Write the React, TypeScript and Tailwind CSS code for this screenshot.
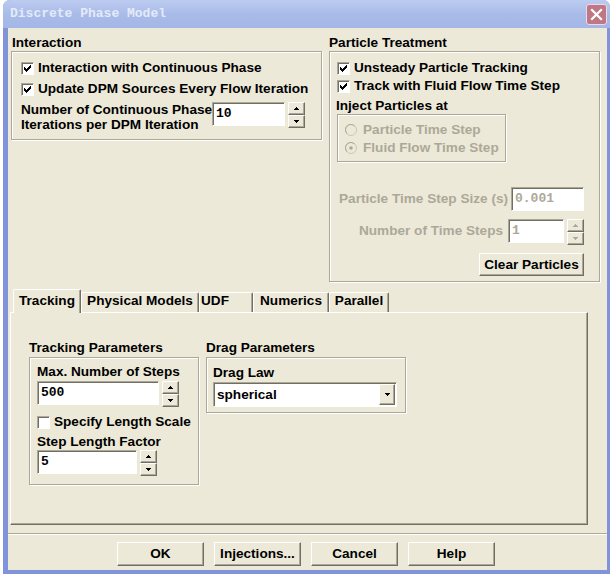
import type { ReactNode } from 'react';

// classic 3D edges on the beige dialog face
const raised =
  'border border-t-white border-l-white border-r-[#716f64] border-b-[#716f64] shadow-[inset_-1px_-1px_0_#aca899]';
const sunken =
  'border border-t-[#aca899] border-l-[#aca899] border-r-white border-b-white shadow-[inset_1px_1px_0_#716f64]';
const etched = 'border border-[#aca899] shadow-[inset_1px_1px_0_#fff,1px_1px_0_#fff]';

function CheckBox({ checked }: { checked: boolean }) {
  return (
    <span className={`w-[13px] h-[13px] bg-white flex items-center justify-center shrink-0 ${sunken}`}>
      {checked && (
        <svg width="7" height="7" viewBox="0 0 7 7" shapeRendering="crispEdges">
          <polygon points="0,2 2,4 7,-1 7,2 2,7 0,5" fill="#000" />
        </svg>
      )}
    </span>
  );
}

function CheckRow({ checked, label, className = '' }: { checked: boolean; label: string; className?: string }) {
  return (
    <div className={`flex items-center h-[16px] gap-[4px] whitespace-nowrap ${className}`}>
      <CheckBox checked={checked} />
      <span>{label}</span>
    </div>
  );
}

function RadioRow({ checked = false, label, className = '' }: { checked?: boolean; label: string; className?: string }) {
  return (
    <div className={`flex items-center h-[16px] gap-[6px] whitespace-nowrap text-[#aca899] ${className}`}>
      <svg width="12" height="12" viewBox="0 0 12 12" className="shrink-0">
        <circle cx="6" cy="6" r="5.5" fill="#ece9d8" stroke="#c9c6b8" />
        <path d="M2 9.5 A5 5 0 0 1 9.5 2" fill="none" stroke="#aca899" />
        {checked && <circle cx="6" cy="6" r="1.8" fill="#aca899" />}
      </svg>
      <span>{label}</span>
    </div>
  );
}

function Arrow({ up, color }: { up: boolean; color: string }) {
  return (
    <svg width="5" height="3" viewBox="0 0 5 3" shapeRendering="crispEdges">
      <polygon points={up ? '2.5,0 5,3 0,3' : '0,0 5,0 2.5,3'} fill={color} />
    </svg>
  );
}

function Spin({ disabled = false, className = '' }: { disabled?: boolean; className?: string }) {
  const c = disabled ? '#aca899' : '#000';
  return (
    <div className={`flex flex-col w-[17px] h-[26px] shrink-0 ${className}`}>
      <div className={`h-[13px] flex items-center justify-center bg-[#ece9d8] ${raised}`}>
        <Arrow up color={c} />
      </div>
      <div className={`h-[13px] flex items-center justify-center bg-[#ece9d8] ${raised}`}>
        <Arrow up={false} color={c} />
      </div>
    </div>
  );
}

function Field({ value, disabled = false, className = '' }: { value: string; disabled?: boolean; className?: string }) {
  return (
    <div
      className={`${sunken} shrink-0 flex items-center pl-[3px] bg-white font-['Liberation_Mono',monospace] text-[13px] font-bold ${
        disabled ? 'text-[#aca899]' : 'text-black'
      } ${className}`}
    >
      {value}
    </div>
  );
}

function Button({ children, className = '' }: { children: ReactNode; className?: string }) {
  return (
    <button type="button" className={`${raised} bg-[#ece9d8] flex items-center justify-center font-bold whitespace-nowrap ${className}`}>
      {children}
    </button>
  );
}

function Tab({ label, active = false, className = '' }: { label: string; active?: boolean; className?: string }) {
  return (
    <div
      className={`flex justify-center whitespace-nowrap rounded-t-[2px] border-t border-l border-r border-t-white border-l-white border-r-[#716f64] shadow-[inset_-1px_0_0_#aca899] bg-[#ece9d8] ${
        active ? 'h-[24px] pt-[3px] -mb-[1px] relative z-10' : 'h-[20px]'
      } ${className}`}
    >
      {label}
    </div>
  );
}

export default function App() {
  return (
    <div className="w-[613px] h-[574px] bg-white overflow-hidden font-['Liberation_Sans',Arial,sans-serif] text-[13.6px] font-bold leading-[16px] text-black select-none">
      <div className="ml-[3px] w-[607px] h-[574px] bg-[#8193d9] rounded-t-[7px] flex flex-col">
        {/* title bar */}
        <div className="h-[28px] shrink-0 flex items-center pl-[7px] pr-[3px] rounded-t-[7px] bg-gradient-to-b from-[#bccbf0] via-[#a9bbe8] to-[#a3b6e6]">
          <span className="font-['Liberation_Mono',monospace] text-[13px] font-bold text-[#e4eaf8]">
            Discrete Phase Model
          </span>
          <div className="ml-auto w-[21px] h-[21px] rounded-[3px] border border-[#eadbe2] bg-[#bf7786] flex items-center justify-center">
            <svg width="13" height="13" viewBox="0 0 13 13">
              <path d="M2 2 L11 11 M11 2 L2 11" stroke="#fff" strokeWidth="2.2" strokeLinecap="square" />
            </svg>
          </div>
        </div>

        {/* dialog body */}
        <div className="ml-[5px] mr-[3px] h-[542px] bg-[#ece9d8] flex flex-col">
          <div className="flex pl-[3px] pt-[7px] gap-[7px]">
            {/* Interaction */}
            <div className="w-[311px]">
              <div className="pl-[1px] h-[16px]">Interaction</div>
              <div className={`${etched} h-[89px] pl-[9px] pt-[8px]`}>
                <CheckRow checked label="Interaction with Continuous Phase" />
                <CheckRow checked label="Update DPM Sources Every Flow Iteration" className="mt-[5px]" />
                <div className="mt-[5px] flex">
                  <div className="w-[191px] shrink-0 leading-[15px] whitespace-nowrap">
                    Number of Continuous Phase
                    <br />
                    Iterations per DPM Iteration
                  </div>
                  <Field value="10" className="w-[73px] h-[24px]" />
                  <Spin className="ml-[3px]" />
                </div>
              </div>
            </div>

            {/* Particle Treatment */}
            <div className="w-[271px]">
              <div className="h-[16px]">Particle Treatment</div>
              <div className={`${etched} h-[231px] pl-[7px] pt-[8px] pr-[15px] flex flex-col`}>
                <CheckRow checked label="Unsteady Particle Tracking" />
                <CheckRow checked label="Track with Fluid Flow Time Step" className="mt-[2px]" />
                <div className="mt-[4px] -ml-[1px] h-[16px]">Inject Particles at</div>
                <div className={`${etched} w-[169px] h-[48px] pl-[7px] pt-[7px]`}>
                  <RadioRow label="Particle Time Step" />
                  <RadioRow checked label="Fluid Flow Time Step" className="mt-[2px]" />
                </div>
                <div className="mt-[25px] flex items-center justify-end h-[24px] text-[#aca899]">
                  <span className="whitespace-nowrap">Particle Time Step Size (s)</span>
                  <Field disabled value="0.001" className="ml-[3px] w-[73px] h-[24px]" />
                </div>
                <div className="mt-[8px] flex items-start justify-end text-[#aca899]">
                  <span className="h-[24px] flex items-center whitespace-nowrap">Number of Time Steps</span>
                  <Field disabled value="1" className="ml-[5px] w-[56px] h-[24px]" />
                  <Spin disabled className="ml-[3px]" />
                </div>
                <Button className="mt-[8px] self-end w-[105px] h-[23px]">Clear Particles</Button>
              </div>
            </div>
          </div>

          {/* tabbed options */}
          <div className="ml-[2px] mt-[7px] w-[578px]">
            <div className="flex items-end h-[23px] pl-[3px]">
              <Tab active label="Tracking" className="w-[68px]" />
              <Tab label="Physical Models" className="w-[118px]" />
              <Tab label="UDF" className="w-[54px] justify-start pl-[1px]" />
              <Tab label="Numerics" className="w-[76px]" />
              <Tab label="Parallel" className="w-[60px]" />
            </div>
            <div className="h-[213px] border border-t-white border-l-white border-r-[#716f64] border-b-[#716f64] shadow-[inset_-1px_-1px_0_#aca899] pt-[27px] pl-[18px] flex gap-[7px]">
              <div className="w-[170px]">
                <div className="h-[16px] whitespace-nowrap">Tracking Parameters</div>
                <div className={`${etched} mt-[1px] h-[128px] pl-[7px] pt-[6px]`}>
                  <div className="h-[16px] whitespace-nowrap">Max. Number of Steps</div>
                  <div className="mt-[1px] flex">
                    <Field value="500" className="w-[122px] h-[24px]" />
                    <Spin className="ml-[3px]" />
                  </div>
                  <CheckRow checked={false} label="Specify Length Scale" className="mt-[7px]" />
                  <div className="mt-[4px] h-[16px] whitespace-nowrap">Step Length Factor</div>
                  <div className="flex">
                    <Field value="5" className="w-[100px] h-[24px]" />
                    <Spin className="ml-[3px]" />
                  </div>
                </div>
              </div>
              <div className="w-[200px]">
                <div className="h-[16px]">Drag Parameters</div>
                <div className={`${etched} mt-[1px] h-[56px] pl-[6px] pt-[7px]`}>
                  <div className="h-[16px]">Drag Law</div>
                  <div className={`${sunken} mt-[1px] w-[184px] h-[25px] bg-white flex items-stretch`}>
                    <span className="flex-1 pl-[3px] flex items-center">spherical</span>
                    <span className={`${raised} w-[16px] mr-[1px] my-[1px] bg-[#ece9d8] flex items-center justify-center`}>
                      <Arrow up={false} color="#000" />
                    </span>
                  </div>
                </div>
              </div>
            </div>
          </div>

          <div className="mt-[8px] h-[2px] border-t border-t-[#aca899] border-b border-b-white" />

          <div className="mt-[7px] flex pl-[109px] gap-[10px]">
            <Button className="w-[87px] h-[24px]">OK</Button>
            <Button className="w-[87px] h-[24px]">Injections...</Button>
            <Button className="w-[87px] h-[24px]">Cancel</Button>
            <Button className="w-[87px] h-[24px]">Help</Button>
          </div>
        </div>
      </div>
    </div>
  );
}
